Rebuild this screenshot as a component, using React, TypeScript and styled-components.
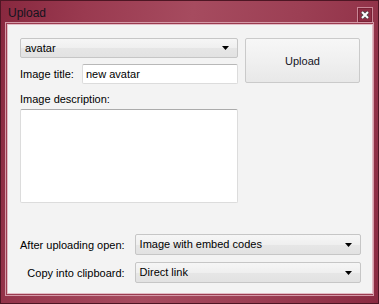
import { FC } from 'react';
import styled, { createGlobalStyle } from 'styled-components';

const GlobalStyle = createGlobalStyle`
  html, body {
    margin: 0;
    padding: 0;
    background: #ffffff;
  }

  body {
    font-family: 'Liberation Sans', Arial, sans-serif;
    font-size: 11px;
  }
`;

const Arrow: FC = () => (
  <svg width="7" height="4" viewBox="0 0 7 4">
    <path d="M0 0 H7 L3.5 4 Z" fill="#000" />
  </svg>
);

const CloseIcon: FC = () => (
  <svg width="16" height="16" viewBox="0 0 16 16">
    <rect x="0.5" y="0.5" width="15" height="15" fill="#8f2d44" stroke="#c98696" />
    <rect x="1.5" y="1.5" width="13" height="13" fill="none" stroke="#7a2236" />
    <path d="M5 5 L11 11 M11 5 L5 11" stroke="#4a4a4a" strokeWidth="3.6" />
    <path d="M5 5 L11 11 M11 5 L5 11" stroke="#ffffff" strokeWidth="2" />
  </svg>
);

const Combo: FC<{ value: string }> = ({ value }) => (
  <ComboBox>
    <ComboText>{value}</ComboText>
    <Arrow />
  </ComboBox>
);

export default function App() {
  return (
    <>
      <GlobalStyle />
      <Window>
        <TitleBar>
          <Title>Upload</Title>
          <CloseButton>
            <CloseIcon />
          </CloseButton>
        </TitleBar>
        <ClientFrame>
          <Client>
            <TopSection>
              <LeftColumn>
                <Combo value="avatar" />
                <FieldRow>
                  <FieldLabel>Image title:</FieldLabel>
                  <TextBox>new avatar</TextBox>
                </FieldRow>
                <DescriptionLabel>Image description:</DescriptionLabel>
                <TextArea />
              </LeftColumn>
              <UploadButton>Upload</UploadButton>
            </TopSection>
            <Options>
              <OptionLabel>After uploading open:</OptionLabel>
              <Combo value="Image with embed codes" />
              <OptionLabel>Copy into clipboard:</OptionLabel>
              <Combo value="Direct link" />
            </Options>
          </Client>
        </ClientFrame>
      </Window>
    </>
  );
}

const Window = styled.div`
  display: flex;
  flex-direction: column;
  box-sizing: border-box;
  width: 379px;
  height: 304px;
  border: 1px solid #4e1624;
  background: linear-gradient(
    100deg,
    #88283f 0%,
    #9a3a50 20%,
    #a64b5f 45%,
    #9c3f54 70%,
    #8b2b42 100%
  );
`;

const TitleBar = styled.div`
  display: flex;
  align-items: center;
  justify-content: space-between;
  height: 21px;
  padding: 0 5px 0 7px;
`;

const Title = styled.span`
  margin-top: 3px;
  font-size: 12px;
  color: #14141e;
`;

const CloseButton = styled.div`
  display: flex;
  margin-top: 6px;
`;

const ClientFrame = styled.div`
  flex: 1;
  display: flex;
  margin: 0 4px 7px 4px;
  border: 1px solid #d49aa7;
  padding: 1px;
  background: #9a3b50;
`;

const Client = styled.div`
  flex: 1;
  display: flex;
  flex-direction: column;
  border: 1px solid #e2bcc5;
  padding: 13px 11px 10px 12px;
  background: #f3f3f3;
`;

const TopSection = styled.div`
  display: flex;
  align-items: flex-start;
  gap: 7px;
`;

const LeftColumn = styled.div`
  display: flex;
  flex-direction: column;
  width: 218px;
`;

const ComboBox = styled.div`
  display: flex;
  align-items: center;
  justify-content: space-between;
  box-sizing: border-box;
  height: 20px;
  padding: 0 8px 0 4px;
  border: 1px solid #c6c6c6;
  border-radius: 2px;
  background: linear-gradient(#f6f6f6 0%, #efefef 50%, #e6e6e6 51%, #e2e2e2 100%);
  color: #000;
`;

const ComboText = styled.span`
  line-height: 1;
`;

const FieldRow = styled.div`
  display: flex;
  align-items: center;
  margin-top: 6px;
`;

const FieldLabel = styled.span`
  width: 62px;
  color: #000;
`;

const TextBox = styled.div`
  flex: 1;
  display: flex;
  align-items: center;
  box-sizing: border-box;
  height: 20px;
  padding: 0 3px;
  border: 1px solid #dcdcdc;
  border-top-color: #b8b8b8;
  border-radius: 2px;
  background: #fff;
  color: #000;
`;

const DescriptionLabel = styled.span`
  margin-top: 8px;
  margin-bottom: 3px;
  line-height: 14px;
  color: #000;
`;

const TextArea = styled.div`
  box-sizing: border-box;
  height: 94px;
  border: 1px solid #dcdcdc;
  border-top-color: #ababab;
  border-radius: 2px;
  background: #fff;
`;

const UploadButton = styled.div`
  display: flex;
  align-items: center;
  justify-content: center;
  box-sizing: border-box;
  width: 115px;
  height: 45px;
  border: 1px solid #cacaca;
  border-radius: 2px;
  background: linear-gradient(#f7f7f7 0%, #f0f0f0 50%, #e8e8e8 100%);
  color: #14141e;
`;

const Options = styled.div`
  display: grid;
  grid-template-columns: auto 226px;
  grid-auto-rows: 21px;
  justify-content: end;
  align-items: center;
  column-gap: 10px;
  row-gap: 7px;
  margin-top: auto;

  ${ComboBox} {
    height: 21px;
  }
`;

const OptionLabel = styled.span`
  white-space: nowrap;
  text-align: right;
  color: #000;
`;
